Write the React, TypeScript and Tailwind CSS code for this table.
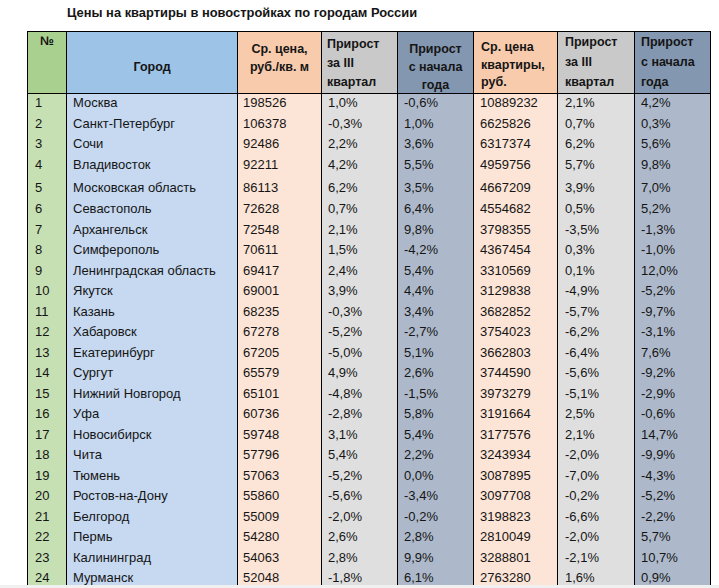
import React from "react";

type Row = [string, string, string, string, string, string, string, string];

const rows: Row[] = [
  ["1", "Москва", "198526", "1,0%", "-0,6%", "10889232", "2,1%", "4,2%"],
  ["2", "Санкт-Петербург", "106378", "-0,3%", "1,0%", "6625826", "0,7%", "0,3%"],
  ["3", "Сочи", "92486", "2,2%", "3,6%", "6317374", "6,2%", "5,6%"],
  ["4", "Владивосток", "92211", "4,2%", "5,5%", "4959756", "5,7%", "9,8%"],
  ["5", "Московская область", "86113", "6,2%", "3,5%", "4667209", "3,9%", "7,0%"],
  ["6", "Севастополь", "72628", "0,7%", "6,4%", "4554682", "0,5%", "5,2%"],
  ["7", "Архангельск", "72548", "2,1%", "9,8%", "3798355", "-3,5%", "-1,3%"],
  ["8", "Симферополь", "70611", "1,5%", "-4,2%", "4367454", "0,3%", "-1,0%"],
  ["9", "Ленинградская область", "69417", "2,4%", "5,4%", "3310569", "0,1%", "12,0%"],
  ["10", "Якутск", "69001", "3,9%", "4,4%", "3129838", "-4,9%", "-5,2%"],
  ["11", "Казань", "68235", "-0,3%", "3,4%", "3682852", "-5,7%", "-9,7%"],
  ["12", "Хабаровск", "67278", "-5,2%", "-2,7%", "3754023", "-6,2%", "-3,1%"],
  ["13", "Екатеринбург", "67205", "-5,0%", "5,1%", "3662803", "-6,4%", "7,6%"],
  ["14", "Сургут", "65579", "4,9%", "2,6%", "3744590", "-5,6%", "-9,2%"],
  ["15", "Нижний Новгород", "65101", "-4,8%", "-1,5%", "3973279", "-5,1%", "-2,9%"],
  ["16", "Уфа", "60736", "-2,8%", "5,8%", "3191664", "2,5%", "-0,6%"],
  ["17", "Новосибирск", "59748", "3,1%", "5,4%", "3177576", "2,1%", "14,7%"],
  ["18", "Чита", "57796", "5,4%", "2,2%", "3243934", "-2,0%", "-9,9%"],
  ["19", "Тюмень", "57063", "-5,2%", "0,0%", "3087895", "-7,0%", "-4,3%"],
  ["20", "Ростов-на-Дону", "55860", "-5,6%", "-3,4%", "3097708", "-0,2%", "-5,2%"],
  ["21", "Белгород", "55009", "-2,0%", "-0,2%", "3198823", "-6,6%", "-2,2%"],
  ["22", "Пермь", "54280", "2,6%", "2,8%", "2810049", "-2,0%", "5,7%"],
  ["23", "Калининград", "54063", "2,8%", "9,9%", "3288801", "-2,1%", "10,7%"],
  ["24", "Мурманск", "52048", "-1,8%", "6,1%", "2763280", "1,6%", "0,9%"],
];

const bodyBg = [
  "bg-[#c6e0b4]",
  "bg-[#c6d9f1]",
  "bg-[#fce4d6]",
  "bg-[#dfdfdf]",
  "bg-[#adb9ca]",
  "bg-[#fce4d6]",
  "bg-[#dfdfdf]",
  "bg-[#adb9ca]",
];

const widths = [
  "w-[39px]",
  "w-[171px]",
  "w-[84px]",
  "w-[76px]",
  "w-[76px]",
  "w-[84px]",
  "w-[77px]",
  "w-[76px]",
];

const pads = ["pl-[7px]", "pl-[6px]", "pl-[5px]", "pl-[6px]", "pl-[6px]", "pl-[6px]", "pl-[7px]", "pl-[6px]"];

export default function App() {
  return (
    <div
      className="w-[719px] h-[588px] bg-white overflow-hidden flex flex-col text-[#151515]"
      style={{ fontFamily: '"Liberation Sans", Arial, sans-serif' }}
    >
      <div className="h-[31px] shrink-0 pl-[67px] pt-[4px] text-[12.9px] font-bold leading-[18px]">
        Цены на квартиры в новостройках по городам России
      </div>
      <div className="h-[554px] shrink-0 overflow-hidden">
        <div className="ml-[27px] w-[684px] border-l border-t border-black flex flex-col">
          {/* header */}
          <div className="flex h-[62px] border-b border-black text-[12.5px] font-bold">
            <div className={`${widths[0]} shrink-0 border-r border-black bg-[#a9d08e] text-center leading-[19px] pt-[0px]`}>№</div>
            <div className={`${widths[1]} shrink-0 border-r border-black bg-[#9dc3e6] text-center leading-[19px] pt-[26px]`}>Город</div>
            <div className={`${widths[2]} shrink-0 border-r border-black bg-[#f8cbad] text-center leading-[18px] pt-[8px]`}>
              Ср. цена,
              <br />
              руб./кв. м
            </div>
            <div className={`${widths[3]} shrink-0 border-r border-black bg-[#c9c9c9] leading-[19px] pt-[3px] pl-[5px] whitespace-nowrap overflow-hidden`}>
              Прирост
              <br />
              за III
              <br />
              квартал
            </div>
            <div className={`${widths[4]} shrink-0 border-r border-black bg-[#8497b0] text-center leading-[18px] pt-[8px]`}>
              Прирост
              <br />с начала
              <br />
              года
            </div>
            <div className={`${widths[5]} shrink-0 border-r border-black bg-[#f8cbad] leading-[17.5px] pt-[7px] pl-[7px]`}>
              Ср. цена
              <br />
              квартиры,
              <br />
              руб.
            </div>
            <div className={`${widths[6]} shrink-0 border-r border-black bg-[#c9c9c9] leading-[20px] pt-0 pl-[7px]`}>
              Прирост
              <br />
              за III
              <br />
              квартал
            </div>
            <div className={`${widths[7]} shrink-0 border-r border-black bg-[#8497b0] leading-[20px] pt-0 pl-[6px]`}>
              Прирост
              <br />с начала
              <br />
              года
            </div>
          </div>
          {/* body */}
          {rows.map((r, i) => (
            <div key={i} className={`flex text-[13px] leading-[18px] ${i === 4 ? "h-[24px]" : "h-[20.5px]"}`}>
              {r.map((c, j) => (
                <div
                  key={j}
                  className={`${widths[j]} ${bodyBg[j]} ${pads[j]} ${i === 4 ? "pt-[3px]" : "pt-0"} shrink-0 border-r border-black whitespace-nowrap overflow-hidden`}
                >
                  {c}
                </div>
              ))}
            </div>
          ))}
        </div>
      </div>
      <div className="h-[3px] shrink-0 bg-[#f0f0f0]" />
    </div>
  );
}
